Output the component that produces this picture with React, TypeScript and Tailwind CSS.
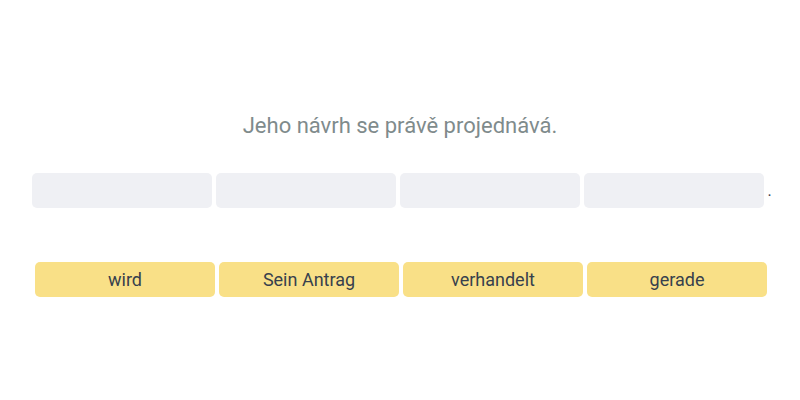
import React from "react"

const words = ["wird", "Sein Antrag", "verhandelt", "gerade"]

export default function App() {
  return (
    <div className="w-[800px] h-[400px] bg-white flex flex-col items-center pt-[111px] font-['Roboto',sans-serif]">
      <p className="text-[22px] leading-[30px] text-[#7f8b8c]">Jeho návrh se právě projednává.</p>

      <div className="mt-[32px] flex items-center gap-1 ml-[4px]">
        {[0, 1, 2, 3].map((i) => (
          <div key={i} className="w-[180px] h-[35px] rounded-[5px] bg-[#eff0f4]" />
        ))}
        <span className="text-[#37414d] text-base leading-[22px] ml-[-1px]">.</span>
      </div>

      <div className="mt-[54px] flex gap-1 ml-[2px]">
        {words.map((w) => (
          <button
            key={w}
            className="w-[180px] h-[35px] rounded-[5px] bg-[#f9e087] text-[#37414d] text-[18px] leading-[35px]"
          >
            {w}
          </button>
        ))}
      </div>
    </div>
  )
}
